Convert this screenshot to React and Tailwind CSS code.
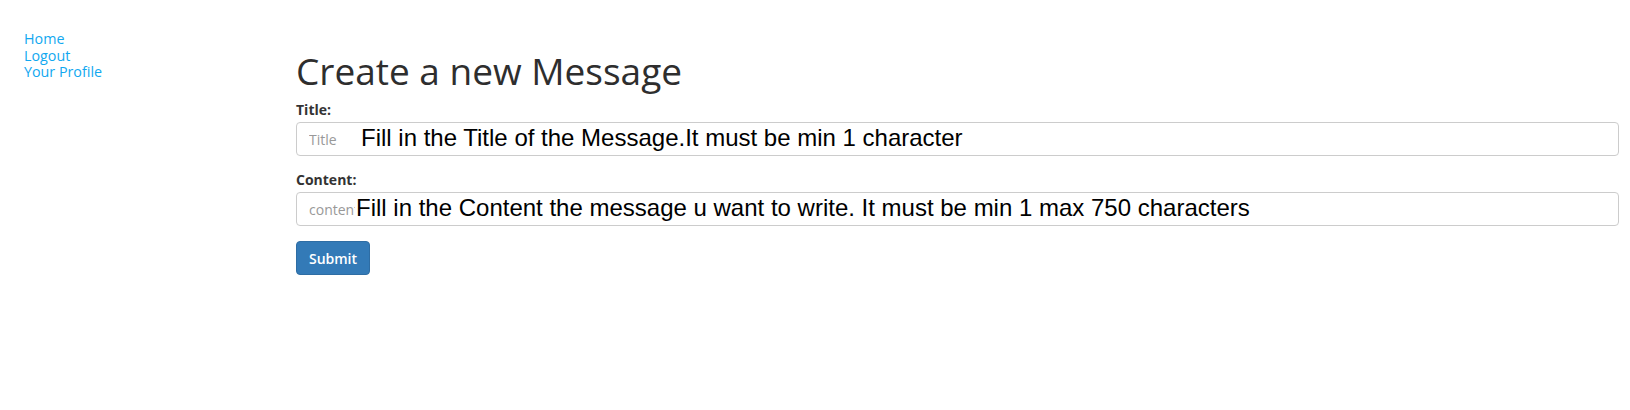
import React from "react";

export default function App() {
  return (
    <div className="flex min-h-[410px] w-full bg-white font-['Open_Sans',sans-serif] text-[#333]">
      <nav className="flex w-[296px] shrink-0 flex-col items-start pl-6 pt-[31px] text-[14.3px] leading-[16.7px] text-[#11a8f0]">
        <a href="#" className="hover:underline">Home</a>
        <a href="#" className="hover:underline">Logout</a>
        <a href="#" className="hover:underline">Your Profile</a>
      </nav>
      <main className="flex min-w-0 flex-1 flex-col items-stretch pr-[11px] pt-[51px]">
        <h1 className="mb-[9px] text-[37px] font-normal leading-[40px] text-[#2e2e2e]">
          Create a new Message
        </h1>
        <form className="flex flex-col" onSubmit={(e) => e.preventDefault()}>
          <label className="mb-[2px] text-[14px] font-bold leading-[20px] text-[#333]">Title:</label>
          <div className="flex h-[34px] items-start overflow-hidden rounded-[4px] border border-[#cccccc] bg-white">
            <input
              placeholder="Title"
              className="h-full w-[58px] shrink-0 bg-transparent pl-3 pr-0 text-[14px] text-[#555] outline-none placeholder:text-[#999]"
            />
            <span className="ml-[6px] mt-[3px] whitespace-nowrap font-['Liberation_Sans',Arial,sans-serif] text-[24px] leading-[24px] text-black">
              Fill in the Title of the Message.It must be min 1 character
            </span>
          </div>
          <label className="mb-[2px] mt-[14px] text-[14px] font-bold leading-[20px] text-[#333]">Content:</label>
          <div className="flex h-[34px] items-start overflow-hidden rounded-[4px] border border-[#cccccc] bg-white">
            <input
              placeholder="content"
              className="h-full w-[58px] shrink-0 bg-transparent pl-3 pr-0 text-[14px] text-[#555] outline-none placeholder:text-[#999]"
            />
            <span className="ml-[1px] mt-[3px] whitespace-nowrap font-['Liberation_Sans',Arial,sans-serif] text-[24px] leading-[24px] text-black">
              Fill in the Content the message u want to write. It must be min 1 max 750 characters
            </span>
          </div>
          <div className="mt-[15px]">
            <button
              type="submit"
              className="h-[34px] w-[74px] rounded-[4px] border border-[#2e6da4] bg-[#337ab7] text-[14px] font-semibold text-white"
            >
              Submit
            </button>
          </div>
        </form>
      </main>
    </div>
  );
}
